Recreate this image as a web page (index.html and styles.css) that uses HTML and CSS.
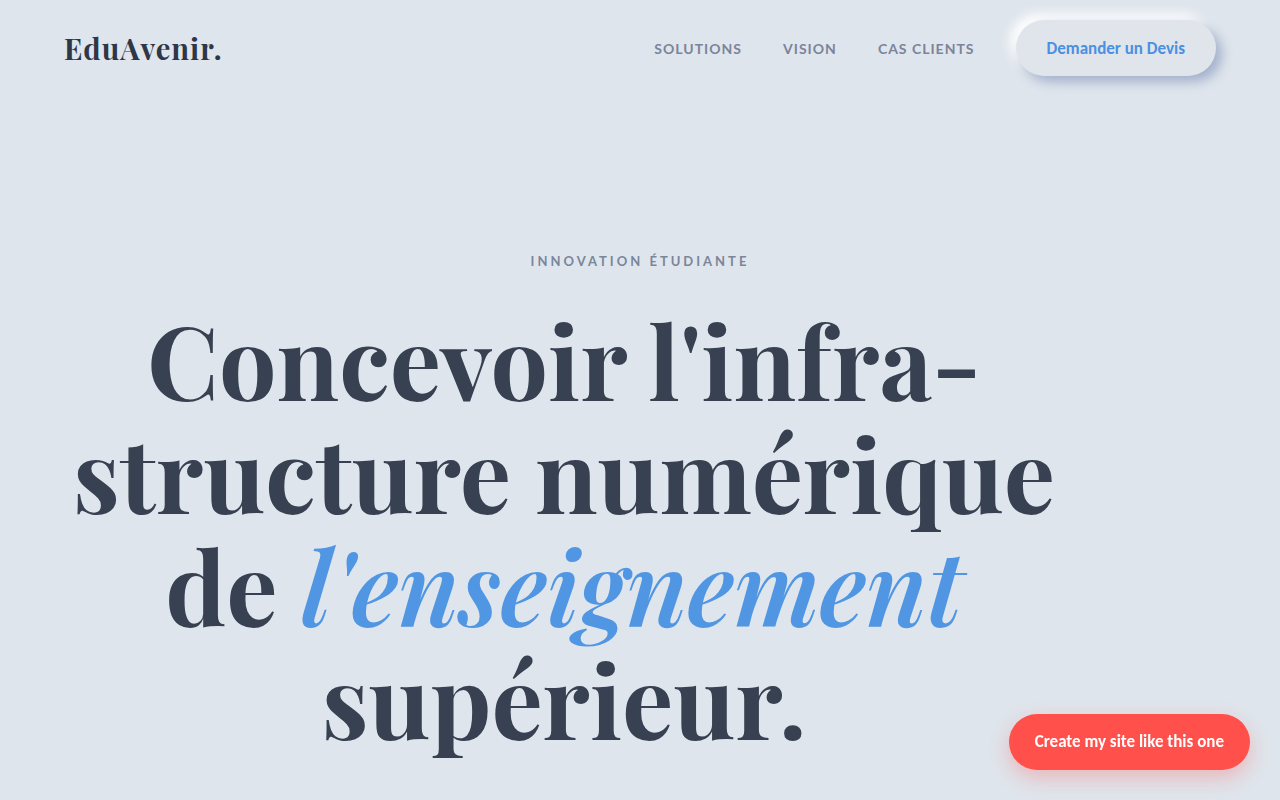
FILE: index.html
```html
<!DOCTYPE html>
<html lang="fr">
<head>
    <meta charset="UTF-8">
    <meta name="viewport" content="width=device-width, initial-scale=1.0">
    <title>EduAvenir</title>
    <link rel="stylesheet" href="styles.css">
</head>
<body>
    <header class="navbar">
        <a href="#" class="logo">EduAvenir.</a>
        <nav class="nav-links">
            <a href="#solutions">Solutions</a>
            <a href="#vision">Vision</a>
            <a href="#clients">Cas clients</a>
            <button type="button" class="btn-quote">Demander un Devis</button>
        </nav>
    </header>

    <main class="hero">
        <p class="eyebrow">Innovation étudiante</p>
        <h1 class="hero-title">Concevoir l'infra-<br>structure numérique<br>de <em>l'enseignement</em><br>supérieur.</h1>
    </main>

    <a href="#create" class="cta-floating">Create my site like this one</a>
</body>
</html>
```

FILE: styles.css
```css
* {
    margin: 0;
    padding: 0;
    box-sizing: border-box;
}

body {
    font-family: 'Lato', sans-serif;
    background: #dfe5ec;
    color: #374151;
}

a {
    text-decoration: none;
}

.navbar {
    display: flex;
    justify-content: space-between;
    align-items: center;
    padding: 20px 64px;
}

.logo {
    font-family: 'Playfair Display', 'Liberation Serif', serif;
    font-size: 29px;
    font-weight: 700;
    letter-spacing: 1px;
    color: #2d3748;
}

.nav-links {
    display: flex;
    align-items: center;
    gap: 41px;
}

.nav-links a {
    font-size: 14px;
    font-weight: 700;
    letter-spacing: 1px;
    text-transform: uppercase;
    color: #7a849a;
}

.btn-quote {
    height: 56px;
    padding: 0 31px;
    border: none;
    border-radius: 28px;
    background: #dfe5ea;
    box-shadow: 6px 6px 12px #a3b1cc, -6px -6px 12px #ffffff;
    font-family: 'Carlito', 'Lato', sans-serif;
    font-size: 17px;
    font-weight: 700;
    color: #4a90e2;
    cursor: pointer;
}

.hero {
    padding: 156px 64px 40px;
}

.eyebrow {
    font-size: 13px;
    font-weight: 700;
    line-height: 18px;
    letter-spacing: 3px;
    text-align: center;
    text-transform: uppercase;
    color: #7a869a;
}

.hero-title {
    max-width: 1000px;
    margin-top: 33px;
    font-family: 'Playfair Display', 'Liberation Serif', serif;
    font-size: 102px;
    font-weight: 700;
    line-height: 113px;
    text-align: center;
}

.hero-title em {
    font-style: italic;
    font-weight: 600;
    color: #5096e3;
}

.cta-floating {
    position: fixed;
    right: 30px;
    bottom: 30px;
    padding: 18px 26px;
    border-radius: 28px;
    background: #ff504b;
    box-shadow: 0 8px 20px rgba(255, 80, 75, 0.3);
    font-family: 'Carlito', 'Lato', sans-serif;
    font-size: 17px;
    font-weight: 700;
    line-height: 20px;
    color: #ffffff;
}
```
